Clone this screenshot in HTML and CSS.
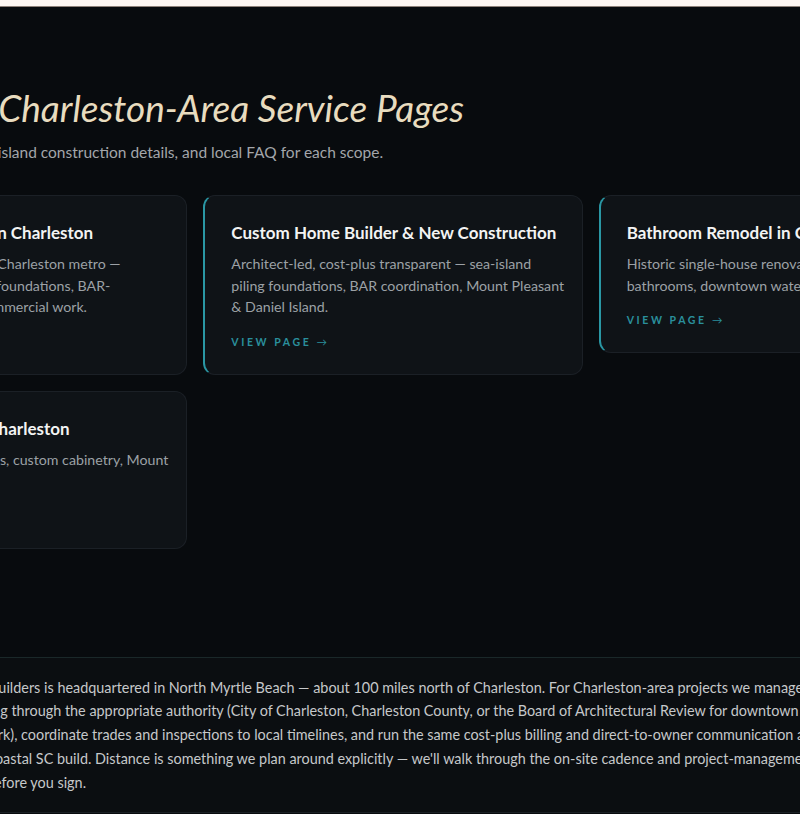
FILE: index.html
```html
<!DOCTYPE html>
<html lang="en">
<head>
  <meta charset="UTF-8" />
  <meta name="viewport" content="width=device-width, initial-scale=1.0"/>
  <title>Charleston-Area Service Pages</title>
  <link rel="stylesheet" href="styles.css">
</head>
<body>
  <div class="top-strip"></div>

  <section class="services">
    <div class="wrap">
      <h2>Explore Our Charleston-Area Service Pages</h2>
      <p class="lede">Permitting info, pricing, sea-island construction details, and local FAQ for each scope.</p>

      <div class="cards">
        <a class="card" href="#">
          <h3>General Contractors in Charleston</h3>
          <p>Residential work over the Charleston metro — engineered, coastal piling foundations, BAR-coordinated remodels, commercial work.</p>
          <span class="more">View page <span class="arrow">→</span></span>
        </a>
        <a class="card" href="#">
          <h3>Custom Home Builder &amp; New Construction</h3>
          <p>Architect-led, cost-plus transparent — sea-island piling foundations, BAR coordination, Mount Pleasant &amp; Daniel Island.</p>
          <span class="more">View page <span class="arrow">→</span></span>
        </a>
        <a class="card" href="#">
          <h3>Bathroom Remodel in Charleston</h3>
          <p>Historic single-house renovations, spa-style primary bathrooms, downtown waterfront condo upgrades.</p>
          <span class="more">View page <span class="arrow">→</span></span>
        </a>
        <a class="card" href="#">
          <h3>Kitchen Remodel in Charleston</h3>
          <p>Galleys, open-plan kitchens, custom cabinetry, Mount Pleasant projects.</p>
          <span class="more">View page <span class="arrow">→</span></span>
        </a>
      </div>
    </div>
  </section>

  <section class="about">
    <div class="about-inner">
      <p>Tidewave Builders is headquartered in North Myrtle Beach — about 100 miles north of Charleston. For Charleston-area projects we manage<br>
      all permitting through the appropriate authority (City of Charleston, Charleston County, or the Board of Architectural Review for downtown historic-<br>
      corridor work), coordinate trades and inspections to local timelines, and run the same cost-plus billing and direct-to-owner communication as<br>
      any other coastal SC build. Distance is something we plan around explicitly — we'll walk through the on-site cadence and project-management<br>
      structure before you sign.</p>
    </div>
  </section>
</body>
</html>
```

FILE: styles.css
```css
body {
  margin: 0;
  background: #080b0e;
  color: #c9cbcd;
  font-family: Lato, "Open Sans", sans-serif;
  overflow-x: hidden;
}

.top-strip {
  height: 6px;
  background: #fdf7f2;
  border-bottom: 1px solid #8d8179;
}

.services {
  padding: 77px 0 108px;
}

.wrap {
  width: 1170px;
  margin-left: -192px;
}

h2 {
  margin: 0 0 8px;
  font-size: 37px;
  font-weight: 400;
  font-style: italic;
  line-height: 48px;
  color: #e8dcbf;
  white-space: nowrap;
}

.lede {
  margin: 0 0 31px;
  font-size: 15.5px;
  line-height: 24px;
  color: #a3a6aa;
  white-space: nowrap;
}

.cards {
  display: grid;
  grid-template-columns: repeat(3, 1fr);
  gap: 16px;
  align-items: start;
}

.card {
  display: block;
  padding: 25px 14px 25px 26px;
  background: #0f1317;
  border: 1px solid #1b2026;
  border-left: 2px solid #2a97a4;
  border-radius: 12px;
  text-decoration: none;
}

.card h3 {
  margin: 0 0 8px;
  font-size: 17px;
  font-weight: 700;
  line-height: 24px;
  color: #f3f3f3;
  white-space: nowrap;
}

.card p {
  margin: 0;
  font-size: 14.2px;
  line-height: 21.5px;
  color: #9ca1a6;
}

.card .more {
  display: block;
  margin-top: 17px;
  font-size: 10.5px;
  font-weight: 700;
  line-height: 14px;
  letter-spacing: 2.6px;
  text-transform: uppercase;
  color: #2a8f9c;
}

.card .arrow {
  font-weight: 400;
}

.about {
  background: #0b0e11;
  border-top: 1px solid #1a2829;
  border-bottom: 1px solid #1a1f24;
}

.about-inner {
  width: 1100px;
  margin-left: -75px;
  padding: 18px 0;
}

.about p {
  margin: 0;
  font-size: 14.4px;
  line-height: 23.75px;
  color: #c6c8ca;
  white-space: nowrap;
}
```
